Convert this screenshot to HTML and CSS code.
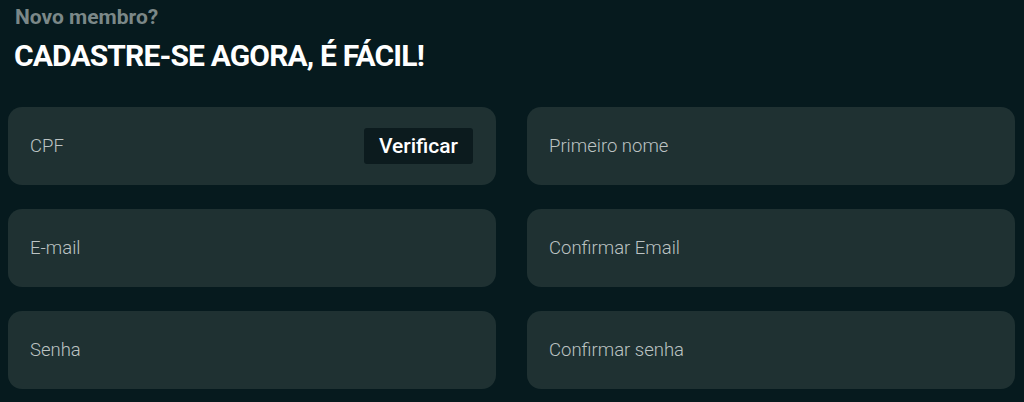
FILE: index.html
```html
<!DOCTYPE html>
<html lang="pt-BR">
<head>
<meta charset="utf-8">
<link rel="stylesheet" href="styles.css">
</head>
<body>
<main class="page">
  <p class="kicker">Novo membro?</p>
  <h1 class="title">CADASTRE-SE AGORA, É FÁCIL!</h1>
  <form class="grid">
    <div class="field">
      <span class="ph">CPF</span>
      <button type="button" class="verify">Verificar</button>
    </div>
    <div class="field"><span class="ph">Primeiro nome</span></div>
    <div class="field"><span class="ph">E-mail</span></div>
    <div class="field"><span class="ph">Confirmar Email</span></div>
    <div class="field"><span class="ph">Senha</span></div>
    <div class="field"><span class="ph">Confirmar senha</span></div>
  </form>
</main>
</body>
</html>
```
FILE: styles.css
```css
html, body {
  margin: 0;
  padding: 0;
  background: #061a1e;
  height: 100%;
}
body {
  font-family: Roboto, "Liberation Sans", sans-serif;
  overflow: hidden;
}
.page {
  padding: 4px 9px 0 8px;
}
.kicker {
  margin: 0 0 0 7px;
  color: #7b8888;
  font-weight: 700;
  font-size: 21px;
  line-height: 26px;
  letter-spacing: 0;
}
.title {
  margin: 8px 0 0 6px;
  color: #ffffff;
  font-weight: 700;
  font-size: 30px;
  letter-spacing: -0.85px;
  line-height: 36px;
}
.grid {
  margin-top: 33px;
  display: grid;
  grid-template-columns: 488px 488px;
  column-gap: 31px;
  row-gap: 24px;
}
.field {
  height: 78px;
  background: #1f3132;
  border-radius: 14px;
  display: flex;
  align-items: center;
  justify-content: space-between;
  padding: 0 23px 0 22px;
  box-sizing: border-box;
}
.ph {
  color: #bcc3c3;
  font-size: 18.5px;
  font-weight: 300;
}
.verify {
  background: #0c1b1e;
  color: #ffffff;
  border: none;
  border-radius: 3px;
  font-family: Roboto, "Liberation Sans", sans-serif;
  font-size: 21px;
  font-weight: 500;
  height: 36px;
  width: 109px;
  padding: 0;
}
```
